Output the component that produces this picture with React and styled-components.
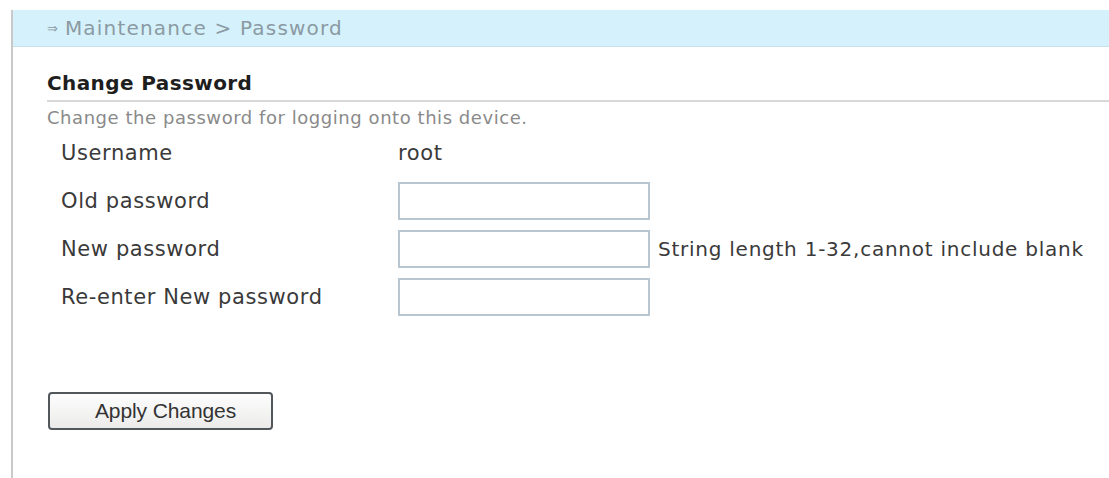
import React from 'react'
import styled, { createGlobalStyle } from 'styled-components'

const Global = createGlobalStyle`
  html, body { margin: 0; padding: 0; background: #fff; }
  body { font-family: "DejaVu Sans", Verdana, sans-serif; overflow: hidden; }
`

const Page = styled.div`
  padding: 10px 0 0 11px;
  height: 478px;
  box-sizing: border-box;
`

const Frame = styled.div`
  border-left: 2px solid #c9c9c9;
  min-height: 470px;
`

const Crumb = styled.div`
  height: 37px;
  background: #d5f1fb;
  border-bottom: 1px solid #c9e3ec;
  box-sizing: border-box;
  padding-left: 34px;
  display: flex;
  align-items: center;
  font-size: 20px;
  letter-spacing: 1.2px;
  color: #8b9aa3;
  span { font-size: 13px; margin-right: 7px; letter-spacing: 0; }
`

const Section = styled.div`
  padding-left: 34px;
`

const Title = styled.h2`
  margin: 24px 0 0;
  font-size: 20px;
  letter-spacing: 0.4px;
  font-weight: bold;
  color: #1e1e1e;
  padding-bottom: 5px;
  border-bottom: 2px solid #d8d8d8;
`

const Desc = styled.p`
  margin: 5px 0 0;
  font-size: 18px;
  letter-spacing: 0.55px;
  color: #8a8a8a;
`

const Form = styled.div`
  display: grid;
  grid-template-columns: 337px auto 1fr;
  grid-auto-rows: 48px;
  align-items: center;
  margin: 1px 0 0 14px;
  font-size: 21px;
  letter-spacing: 0.6px;
  color: #3a3a3a;
`

const Label = styled.div``

const Value = styled.div`
  grid-column: 2 / 4;
`

const Field = styled.input`
  width: 252px;
  height: 38px;
  box-sizing: border-box;
  border: 2px solid #b8c6d2;
  background: #fff;
  margin: 0;
`

const Hint = styled.div`
  padding-left: 8px;
  font-size: 20px;
  letter-spacing: 0.75px;
  color: #3a3a3a;
  white-space: nowrap;
`

const Button = styled.button`
  margin: 71px 0 0 1px;
  width: 225px;
  height: 38px;
  padding: 0 0 0 10px;
  border: 2px solid #52575c;
  border-radius: 4px;
  background: linear-gradient(#fdfdfd, #ecebea);
  font-family: "Liberation Sans", Arial, sans-serif;
  font-size: 21px;
  letter-spacing: -0.1px;
  color: #333;
`

export default function App() {
  return (
    <Page>
      <Global />
      <Frame>
        <Crumb><span>⇒</span>Maintenance &gt; Password</Crumb>
        <Section>
          <Title>Change Password</Title>
          <Desc>Change the password for logging onto this device.</Desc>
          <Form>
            <Label>Username</Label>
            <Value>root</Value>
            <Label>Old password</Label>
            <Value><Field type="password" /></Value>
            <Label>New password</Label>
            <Field type="password" />
            <Hint>String length 1-32,cannot include blank</Hint>
            <Label>Re-enter New password</Label>
            <Value><Field type="password" /></Value>
          </Form>
          <Button>Apply Changes</Button>
        </Section>
      </Frame>
    </Page>
  )
}
